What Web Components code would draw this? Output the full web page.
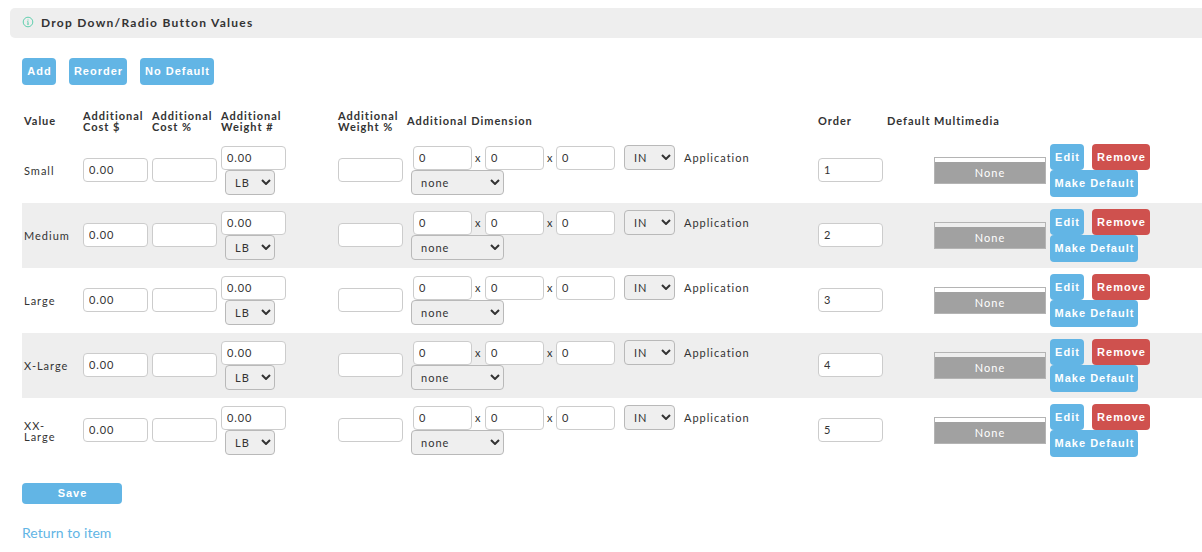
<!DOCTYPE html>
<html lang="en">
<head>
<meta charset="utf-8">
<title>Drop Down/Radio Button Values</title>
<style>
    body{
        margin: 0;
        background-color: #fff;
        color: #333;
        font: 11px/11px Lato, "Liberation Sans", sans-serif;
        letter-spacing: 1px;
        overflow: hidden;
    }
</style>
</head>
<body>
<values-page></values-page>

<script>
// attaches an open shadow root filled with the given markup
function render(el, html){
    const template = document.createElement('template')
    template.innerHTML = html
    el.attachShadow({mode: 'open'}).appendChild(template.content.cloneNode(true))
}

class PanelHeader extends HTMLElement {
    constructor(){
        super()
        render(this, `
            <style>
                :host{
                    display: flex;
                    align-items: center;
                    box-sizing: border-box;
                    height: 30px;
                    padding: 0 0 1px 12px;
                    background-color: #eee;
                    border-radius: 5px 0 0 5px;
                    font-size: 12px;
                    font-weight: 700;
                    letter-spacing: 1.27px;
                }
                svg{
                    width: 12px;
                    height: 12px;
                    margin: 0 7px 1px 0;
                }
            </style>
            <svg viewBox="0 0 12 12" fill="none" stroke="#5fcfae">
                <circle cx="6" cy="6" r="4.8"/>
                <path d="M6 3.5v1M5.4 5.5H6v2.8M5.2 8.2h1.6"/>
            </svg>
            <slot></slot>
        `)
    }
}

class ActionButton extends HTMLElement {
    constructor(){
        super()
        render(this, `
            <style>
                :host{
                    display: inline-flex;
                    height: 27px;
                }
                button{
                    width: 100%;
                    height: 100%;
                    padding: 0 0 0 1px;
                    border: none;
                    border-radius: 4px;
                    background-color: #62b5e5;
                    color: #fff;
                    font: bold 11px/11px "Liberation Sans", Arial, sans-serif;
                    letter-spacing: 1px;
                    white-space: nowrap;
                    cursor: pointer;
                }
                :host([kind="danger"]) button{
                    background-color: #cf514e;
                }
            </style>
            <button><slot></slot></button>
        `)
    }
}

class TextField extends HTMLElement {
    constructor(){
        super()
        render(this, `
            <style>
                :host{
                    display: block;
                    width: 65px;
                    height: 24px;
                }
                input{
                    display: block;
                    box-sizing: border-box;
                    width: 100%;
                    height: 100%;
                    margin: 0;
                    padding: 0 5px 1px;
                    border: 1px solid #ccc;
                    border-radius: 4px;
                    background-color: #fff;
                    color: #333;
                    font: inherit;
                    letter-spacing: 0.9px;
                }
            </style>
            <input type="text">
        `)
    }

    connectedCallback(){
        this.shadowRoot.querySelector('input').value = this.getAttribute('value') || ''
    }
}

class SelectField extends HTMLElement {
    constructor(){
        super()
        render(this, `
            <style>
                :host{
                    display: grid;
                    height: 25px;
                }
                select, svg{
                    grid-area: 1 / 1;
                }
                select{
                    appearance: none;
                    box-sizing: border-box;
                    width: 100%;
                    height: 100%;
                    margin: 0;
                    padding: 0 9px;
                    border: 1px solid #b9b9b9;
                    border-radius: 4px;
                    background-color: #efefef;
                    color: #333;
                    font: inherit;
                    letter-spacing: inherit;
                }
                svg{
                    width: 10px;
                    height: 6px;
                    justify-self: end;
                    align-self: center;
                    margin: 0 4px 1px 0;
                    pointer-events: none;
                }
            </style>
            <select><option></option></select>
            <svg viewBox="0 0 10 6" fill="none" stroke="#333" stroke-width="2"><path d="M1 1l4 4 4-4"/></svg>
        `)
    }

    connectedCallback(){
        this.shadowRoot.querySelector('option').textContent = this.getAttribute('value')
    }
}

class MediaPreview extends HTMLElement {
    constructor(){
        super()
        render(this, `
            <style>
                :host{
                    display: block;
                    box-sizing: border-box;
                    width: 112px;
                    height: 27px;
                    padding-top: 4px;
                    border: 1px solid #b4b4b4;
                }
                div{
                    height: 21px;
                    background-color: #a1a1a1;
                    color: #fff;
                    line-height: 22px;
                    text-align: center;
                }
            </style>
            <div><slot></slot></div>
        `)
    }
}

const columns = '61px 69px 69px 117px 69px 411px 69px 47px 116px 1fr'

class ValueHead extends HTMLElement {
    constructor(){
        super()
        const titles = ['Value', 'Additional Cost $', 'Additional Cost %', 'Additional Weight #',
            'Additional Weight %', 'Additional Dimension', 'Order', 'Default', 'Multimedia']
        render(this, `
            <style>
                :host{
                    display: grid;
                    grid-template-columns: ${columns};
                    align-items: center;
                    height: 35px;
                    font-weight: 700;
                }
                span:first-of-type{
                    padding-left: 2px;
                }
                span:nth-of-type(4){
                    width: min-content;
                }
            </style>
            ${titles.map(t => `<span>${t}</span>`).join('')}
        `)
    }
}

class ValueRow extends HTMLElement {
    constructor(){
        super()
        render(this, `
            <style>
                :host{
                    display: grid;
                    grid-template-columns: ${columns};
                    align-items: center;
                    height: 65px;
                }
                :host(:nth-of-type(even)){
                    background-color: #eee;
                }
                :host > text-field, .field, .dimension{
                    margin-bottom: 1px;
                }
                .name{
                    width: 45px;
                    padding-left: 2px;
                }
                .weight select-field{
                    width: 50px;
                    margin-left: 4px;
                }
                .sizes{
                    display: flex;
                    align-items: center;
                    height: 25px;
                    padding-left: 6px;
                }
                .sizes text-field{
                    width: 59px;
                    margin-top: 1px;
                }
                .sizes i{
                    width: 10px;
                    padding-left: 3px;
                    font-style: normal;
                }
                .sizes i + text-field + i{
                    width: 9px;
                }
                .sizes select-field{
                    width: 51px;
                    margin: 0 9px;
                }
                .dimension > select-field{
                    width: 93px;
                    margin-left: 4px;
                }
                .order{
                    grid-column: 7 / 9;
                }
                .actions div{
                    display: flex;
                    gap: 8px;
                }
                .actions div action-button{
                    height: 26px;
                }
            </style>
            <span class="name"><slot></slot></span>
            <text-field class="field" value="0.00"></text-field>
            <text-field class="field"></text-field>
            <div class="weight">
                <text-field value="0.00"></text-field>
                <select-field value="LB"></select-field>
            </div>
            <text-field class="field"></text-field>
            <div class="dimension">
                <div class="sizes">
                    <text-field value="0"></text-field><i>x</i>
                    <text-field value="0"></text-field><i>x</i>
                    <text-field value="0"></text-field>
                    <select-field value="IN"></select-field>
                    <span>Application</span>
                </div>
                <select-field value="none"></select-field>
            </div>
            <text-field class="field order" value="${this.getAttribute('order')}"></text-field>
            <media-preview>None</media-preview>
            <div class="actions">
                <div>
                    <action-button style="width: 34px">Edit</action-button>
                    <action-button kind="danger" style="width: 58px">Remove</action-button>
                </div>
                <action-button style="width: 88px">Make Default</action-button>
            </div>
        `)
    }
}

class ValuesPage extends HTMLElement {
    constructor(){
        super()
        const values = ['Small', 'Medium', 'Large', 'X-Large', 'XX-Large']
        render(this, `
            <style>
                :host{
                    display: block;
                    padding: 8px 0 0 10px;
                }
                main{
                    padding-left: 12px;
                }
                .toolbar{
                    display: flex;
                    gap: 13px;
                    padding: 20px 0 18px;
                }
                .save{
                    display: flex;
                    width: 100px;
                    height: 21px;
                    margin: 20px 0 21px;
                }
                a{
                    color: #62b5e5;
                    font-size: 14px;
                    line-height: 16px;
                    letter-spacing: 0.05px;
                    text-decoration: none;
                }
            </style>
            <panel-header>Drop Down/Radio Button Values</panel-header>
            <main>
                <div class="toolbar">
                    <action-button style="width: 34px">Add</action-button>
                    <action-button style="width: 58px">Reorder</action-button>
                    <action-button style="width: 74px">No Default</action-button>
                </div>
                <value-head></value-head>
                ${values.map((v, i) => `<value-row order="${i + 1}">${v}</value-row>`).join('')}
                <action-button class="save">Save</action-button>
                <a href="#">Return to item</a>
            </main>
        `)
    }
}

customElements.define('panel-header', PanelHeader)
customElements.define('action-button', ActionButton)
customElements.define('text-field', TextField)
customElements.define('select-field', SelectField)
customElements.define('media-preview', MediaPreview)
customElements.define('value-head', ValueHead)
customElements.define('value-row', ValueRow)
customElements.define('values-page', ValuesPage)
</script>
</body>
</html>
